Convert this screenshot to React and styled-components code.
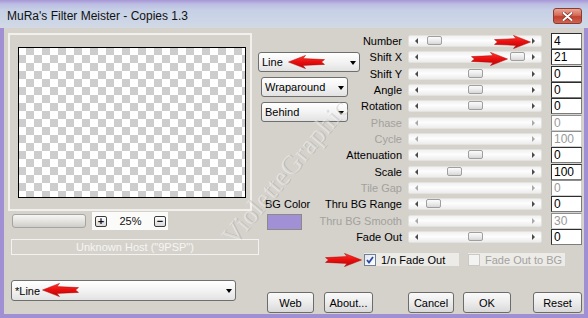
import { Fragment } from "react";
import styled, { createGlobalStyle } from "styled-components";

const GlobalStyle = createGlobalStyle`
  html, body {
    margin: 0;
    padding: 0;
    overflow: hidden;
  }
  body {
    font-family: "Liberation Sans", Arial, sans-serif;
  }
`;

const Window = styled.div`
  position: relative;
  width: 588px;
  height: 318px;
  box-sizing: border-box;
  padding: 0 4px 4px;
  background: #a08fd3;
  display: flex;
  flex-direction: column;
  overflow: hidden;
`;

const TitleBar = styled.div`
  height: 28px;
  margin: 0 -4px;
  padding: 4px 6px 0 7px;
  box-sizing: border-box;
  display: flex;
  align-items: center;
  justify-content: space-between;
  background: linear-gradient(
    180deg,
    #a895d6 0px,
    #bbbde2 4px,
    #c6d0e6 10px,
    #cbd5e6 20px,
    #d3d9e4 28px
  );
`;

const Title = styled.span`
  font-size: 12px;
  color: #111;
`;

const CloseButton = styled.div`
  width: 29px;
  height: 16px;
  box-sizing: border-box;
  border: 1px solid #8c3b31;
  border-radius: 3px;
  background: linear-gradient(180deg, #e9a596 0%, #d66a57 45%, #c1412e 55%, #cf6552 100%);
  display: flex;
  align-items: center;
  justify-content: center;
`;

const Body = styled.div`
  flex: 1;
  display: grid;
  grid-template-columns: 249px 1fr;
  padding: 5px 2px 0 4px;
  background: #d5d2cc;
`;

const LeftPane = styled.div`
  display: flex;
  flex-direction: column;
  align-items: flex-start;
`;

const PreviewFrame = styled.div`
  width: 244px;
  height: 178px;
  box-sizing: border-box;
  border: 2px solid #f1f0ec;
  padding: 12px 0 0 8px;
`;

const Checker = styled.div`
  width: 228px;
  height: 151px;
  box-sizing: border-box;
  border: 1px solid #000;
  background: repeating-conic-gradient(#cdcdcd 0 25%, #fff 0 50%) -1px -1px / 16px 16px;
`;

const ZoomRow = styled.div`
  display: flex;
  align-items: center;
  height: 18px;
  margin-top: 1px;
`;

const ZoomBar = styled.div`
  width: 74px;
  height: 14px;
  margin-left: 4px;
  box-sizing: border-box;
  border: 1px solid #a7a5a1;
  border-radius: 3px;
  background: linear-gradient(180deg, #f6f6f5 0%, #e2e1de 55%, #cfcdc9 100%);
`;

const ZoomGroup = styled.div`
  display: flex;
  align-items: center;
  height: 18px;
  width: 76px;
  margin-left: 6px;
  padding-left: 3px;
  box-sizing: border-box;
  background: #fbfbfa;
`;

const SquareButton = styled.div`
  width: 12px;
  height: 11px;
  box-sizing: border-box;
  border: 1px solid #3c3c3c;
  border-radius: 2px;
  background: linear-gradient(180deg, #ffffff, #d9d9d9);
  font-size: 11px;
  font-weight: bold;
  line-height: 9px;
  text-align: center;
  color: #111;
`;

const ZoomValue = styled.span`
  width: 47px;
  text-align: center;
  font-size: 11px;
  color: #111;
`;

const HostBox = styled.div`
  width: 248px;
  height: 16px;
  margin: 9px 0 0 3px;
  box-sizing: border-box;
  border: 1px solid #f3f2ef;
  font-size: 11px;
  line-height: 14px;
  text-align: center;
  color: #f6f5f3;
`;

const Select = styled.div`
  width: ${(p) => p.$width}px;
  height: ${(p) => p.$height || 20}px;
  margin-left: ${(p) => p.$indent || 0}px;
  margin-top: ${(p) => p.$top || 0}px;
  flex-shrink: 0;
  box-sizing: border-box;
  border: 1px solid #6f6f6f;
  border-radius: 3px;
  background: linear-gradient(180deg, #ffffff 0%, #f3f3f3 50%, #e2e2e2 100%);
  display: flex;
  align-items: center;
  justify-content: space-between;
  padding: 0 3px 0 3px;
  font-size: 11px;
  color: #000;

  &::after {
    content: "";
    width: 0;
    height: 0;
    border-left: 3.5px solid transparent;
    border-right: 3.5px solid transparent;
    border-top: 4px solid #000;
    margin-top: 1px;
  }
`;

const RightPane = styled.div`
  display: flex;
  flex-direction: column;
`;

const ControlArea = styled.div`
  display: flex;
`;

const MidColumn = styled.div`
  width: 65px;
  flex-shrink: 0;
  display: flex;
  flex-direction: column;
  align-items: flex-start;
  padding-top: 19px;
  gap: 5px;
`;

const BgBlock = styled.div`
  margin-top: 71px;
  padding-left: 8px;
  display: flex;
  flex-direction: column;
  align-items: flex-start;
`;

const BgLabel = styled.span`
  font-size: 11px;
  line-height: 13px;
  color: #000;
`;

const Swatch = styled.div`
  width: 35px;
  height: 16px;
  margin: 3px 0 0 2px;
  box-sizing: border-box;
  border: 1px solid #8d8a86;
  background: #a190d6;
`;

const ParamTable = styled.div`
  flex: 1;
  display: grid;
  grid-template-columns: 80px 1fr 31px;
  grid-auto-rows: 16.33px;
`;

const ParamLabel = styled.span`
  justify-self: end;
  align-self: center;
  white-space: nowrap;
  font-size: 11px;
  color: ${(p) => (p.$disabled ? "#a3a19d" : "#000")};
`;

const Track = styled.div`
  position: relative;
  align-self: center;
  height: 12px;
  margin: 0 9px 0 6px;
  box-sizing: border-box;
  border: 1px solid #e3e2df;
  border-radius: 2px;
  background: linear-gradient(180deg, #f1f1f1 0%, #fdfdfd 45%, #ececec 100%);

  &::before,
  &::after {
    content: "";
    position: absolute;
    top: 2px;
    width: 0;
    height: 0;
    border-top: 3px solid transparent;
    border-bottom: 3px solid transparent;
  }
  &::before {
    left: 6px;
    border-right: 3px solid ${(p) => (p.$disabled ? "#a9a9a9" : "#4a4a4a")};
  }
  &::after {
    right: 6px;
    border-left: 3px solid ${(p) => (p.$disabled ? "#a9a9a9" : "#4a4a4a")};
  }
`;

const Thumb = styled.div`
  position: absolute;
  top: 0;
  left: ${(p) => p.$left - 1}px;
  width: 15px;
  height: 9px;
  box-sizing: border-box;
  border: 1px solid #9f9f9f;
  border-radius: 2px;
  background: linear-gradient(180deg, #fbfbfb 0%, #e9e9e9 60%, #d6d6d6 100%);
`;

const ValueBox = styled.div`
  height: 16px;
  box-sizing: border-box;
  border: 1px solid;
  border-color: ${(p) =>
    p.$disabled ? "#8e8e8e #cfcfcf #cfcfcf #8e8e8e" : "#2d2d2d #7c7c7c #7c7c7c #2d2d2d"};
  background: #fff;
  padding-left: 2px;
  font-size: 12px;
  line-height: 14px;
  color: ${(p) => (p.$disabled ? "#9a9a9a" : "#000")};
`;

const CheckRow = styled.div`
  display: flex;
  gap: 9px;
  margin-top: 8px;
  padding-left: 107px;
`;

const CheckItem = styled.div`
  width: ${(p) => p.$width}px;
  height: 13px;
  display: flex;
  align-items: center;
  gap: 5px;
  background: #ecebe8;
  font-size: 11px;
  color: ${(p) => (p.$disabled ? "#a3a19d" : "#000")};
`;

const CheckBox = styled.div`
  width: 12px;
  height: 12px;
  box-sizing: border-box;
  border: 1px solid ${(p) => (p.$disabled ? "#cac9c6" : "#6f7f98")};
  background: ${(p) =>
    p.$disabled ? "#f3f3f2" : "linear-gradient(135deg, #e4e6ea, #ffffff)"};
  display: flex;
  align-items: center;
  justify-content: center;
`;

const ButtonRow = styled.div`
  display: flex;
  margin-top: 26px;
  padding-left: 10px;
`;

const Button = styled.div`
  width: ${(p) => p.$width}px;
  height: 21px;
  margin-left: ${(p) => p.$gap || 0}px;
  box-sizing: border-box;
  border: 1px solid #6c6c6c;
  border-radius: 3px;
  background: linear-gradient(180deg, #fafafa 0%, #ececec 50%, #d9d9d9 100%);
  display: flex;
  align-items: center;
  justify-content: center;
  font-size: 11px;
  color: #000;
`;

const Watermark = styled.div`
  position: absolute;
  left: 185px;
  top: 156px;
  width: 200px;
  line-height: 32px;
  text-align: center;
  transform: rotate(-50deg);
  font-family: "Liberation Serif", "Times New Roman", serif;
  font-size: 27px;
  letter-spacing: 0.5px;
  color: rgba(255, 255, 255, 0.42);
  text-shadow: 1px 1px 0 rgba(140, 136, 130, 0.28);
  pointer-events: none;
`;

const ArrowMark = styled.svg`
  position: absolute;
  left: ${(p) => p.$left}px;
  top: ${(p) => p.$top}px;
  transform: ${(p) => (p.$flip ? "scaleX(-1)" : "none")};
  pointer-events: none;
`;

const params = [
  { label: "Number", value: "4", thumb: 19 },
  { label: "Shift X", value: "21", thumb: 102 },
  { label: "Shift Y", value: "0", thumb: 60 },
  { label: "Angle", value: "0", thumb: 60 },
  { label: "Rotation", value: "0", thumb: 60 },
  { label: "Phase", value: "0", disabled: true },
  { label: "Cycle", value: "100", disabled: true },
  { label: "Attenuation", value: "0", thumb: 60 },
  { label: "Scale", value: "100", thumb: 39 },
  { label: "Tile Gap", value: "0", disabled: true },
  { label: "Thru BG Range", value: "0", thumb: 18 },
  { label: "Thru BG Smooth", value: "30", disabled: true },
  { label: "Fade Out", value: "0", thumb: 60 },
];

const arrows = [
  { left: 494, top: 35 },
  { left: 471, top: 52 },
  { left: 288, top: 55, flip: true },
  { left: 325, top: 253 },
  { left: 42, top: 283, flip: true },
];

function RedArrow({ left, top, flip }) {
  return (
    <ArrowMark $left={left} $top={top} $flip={flip} width="37" height="14" viewBox="0 0 37 14">
      <defs>
        <linearGradient id="arrowFill" x1="0" y1="0" x2="0" y2="1">
          <stop offset="0" stopColor="#ff3a2e" />
          <stop offset="0.5" stopColor="#e80d0d" />
          <stop offset="1" stopColor="#b80606" />
        </linearGradient>
      </defs>
      <path
        d="M0.5 4.6 L22 3.6 L19.5 0.4 L36.5 7 L19.5 13.6 L22 10.4 L0.5 9.4 L3.5 7 Z"
        fill="url(#arrowFill)"
        stroke="#b30000"
        strokeWidth="0.5"
        strokeLinejoin="round"
      />
    </ArrowMark>
  );
}

export default function App() {
  return (
    <>
      <GlobalStyle />
      <Window>
        <TitleBar>
          <Title>MuRa's Filter Meister - Copies 1.3</Title>
          <CloseButton>
            <svg width="11" height="9" viewBox="0 0 11 9">
              <path
                d="M1.5 1 L9.5 8 M9.5 1 L1.5 8"
                stroke="#7a2a20"
                strokeWidth="3.4"
                strokeLinecap="round"
              />
              <path
                d="M1.5 1 L9.5 8 M9.5 1 L1.5 8"
                stroke="#fff"
                strokeWidth="2"
                strokeLinecap="round"
              />
            </svg>
          </CloseButton>
        </TitleBar>
        <Body>
          <LeftPane>
            <PreviewFrame>
              <Checker />
            </PreviewFrame>
            <ZoomRow>
              <ZoomBar />
              <ZoomGroup>
                <SquareButton>+</SquareButton>
                <ZoomValue>25%</ZoomValue>
                <SquareButton>−</SquareButton>
              </ZoomGroup>
            </ZoomRow>
            <HostBox>Unknown Host ("9PSP")</HostBox>
            <Select $width={225} $height={21} $indent={3} $top={25}>
              *Line
            </Select>
          </LeftPane>
          <RightPane>
            <ControlArea>
              <MidColumn>
                <Select $width={102} $indent={1}>Line</Select>
                <Select $width={87} $indent={4}>Wraparound</Select>
                <Select $width={87} $indent={4}>Behind</Select>
                <BgBlock>
                  <BgLabel>BG Color</BgLabel>
                  <Swatch />
                </BgBlock>
              </MidColumn>
              <ParamTable>
                {params.map((p) => (
                  <Fragment key={p.label}>
                    <ParamLabel $disabled={p.disabled}>{p.label}</ParamLabel>
                    <Track $disabled={p.disabled}>
                      {!p.disabled && <Thumb $left={p.thumb} />}
                    </Track>
                    <ValueBox $disabled={p.disabled}>{p.value}</ValueBox>
                  </Fragment>
                ))}
              </ParamTable>
            </ControlArea>
            <CheckRow>
              <CheckItem $width={95}>
                <CheckBox>
                  <svg width="8" height="8" viewBox="0 0 8 8">
                    <path
                      d="M1 4 L3 6.5 L7 1"
                      fill="none"
                      stroke="#2a49a6"
                      strokeWidth="1.8"
                    />
                  </svg>
                </CheckBox>
                1/n Fade Out
              </CheckItem>
              <CheckItem $width={97} $disabled>
                <CheckBox $disabled />
                Fade Out to BG
              </CheckItem>
            </CheckRow>
            <ButtonRow>
              <Button $width={47}>Web</Button>
              <Button $width={49} $gap={10}>About...</Button>
              <Button $width={46} $gap={35}>Cancel</Button>
              <Button $width={48} $gap={9}>OK</Button>
              <Button $width={49} $gap={22}>Reset</Button>
            </ButtonRow>
          </RightPane>
        </Body>
        <Watermark>VioletteGraphic</Watermark>
        {arrows.map((a, i) => (
          <RedArrow key={i} {...a} />
        ))}
      </Window>
    </>
  );
}
